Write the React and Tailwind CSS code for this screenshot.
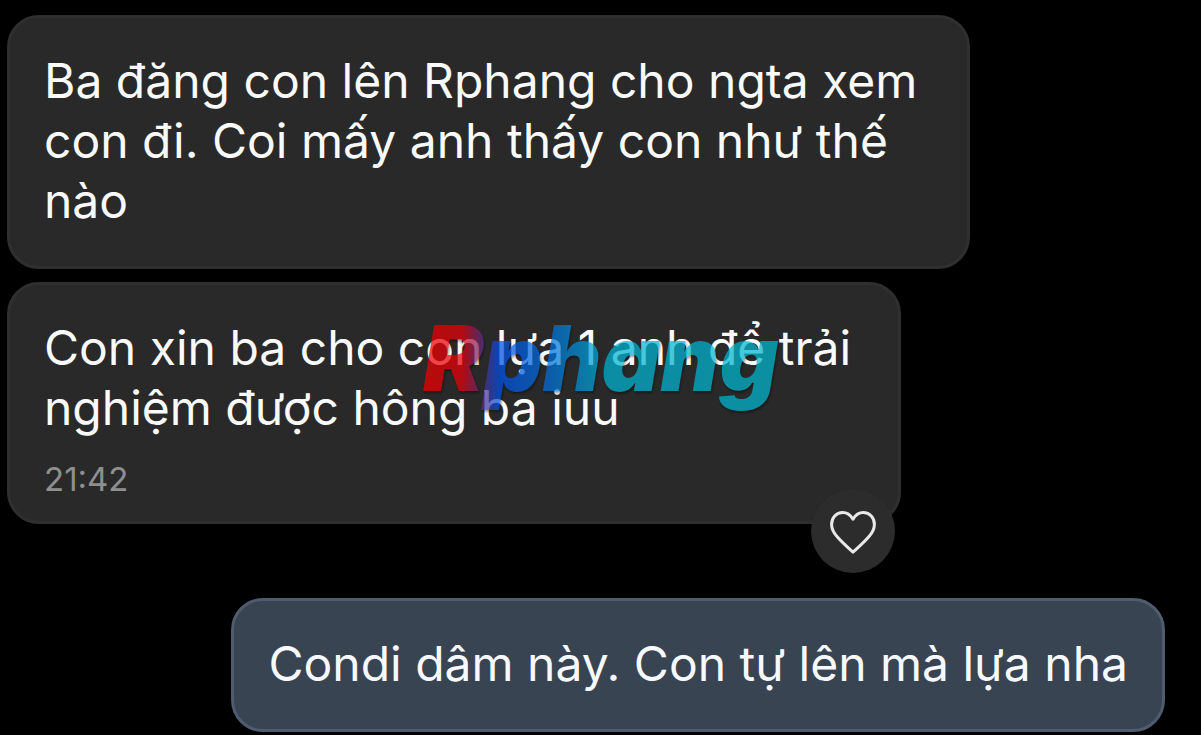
const Bubble = ({ children, className }) => (
  <div className={`relative rounded-[32px] border-3 px-[34px] pt-[33px] text-5xl leading-[60px] ${className}`}>
    {children}
  </div>
)

const HeartIcon = () => (
  <svg width="48" height="46" viewBox="0 0 48 46" fill="none" aria-hidden="true">
    <path
      d="M24 9.2C21.2 4.6 17.6 2.6 13.7 2.6C7.2 2.6 2.6 7.8 2.6 14.4C2.6 19.2 4.8 22.9 8.2 26.8C12.6 31.9 18.2 37 24 42.2C29.8 37 35.4 31.9 39.8 26.8C43.2 22.9 45.4 19.2 45.4 14.4C45.4 7.8 40.8 2.6 34.3 2.6C30.4 2.6 26.8 4.6 24 9.2Z"
      stroke="#e9e9e9"
      strokeWidth="3"
      strokeLinejoin="round"
    />
  </svg>
)

const Watermark = () => (
  <span className="pointer-events-none absolute top-[19px] left-[409px] bg-[linear-gradient(90deg,#f00000_0%,#e8000a_12%,#503090_18%,#0050e8_22%,#0070dc_36%,#00b4d4_52%,#00b8d0_100%)] bg-clip-text px-1 text-[91px] leading-[108px] font-black text-transparent italic opacity-72 drop-shadow-[1px_2px_1px_rgb(0_0_0/0.5)]">
    Rphang
  </span>
)

const App = () => {
  return (
    <main
      lang="vi"
      className="flex min-h-screen flex-col items-start bg-black pt-[15px] pr-9 pb-1 pl-[7px] font-['Inter','Noto_Sans',sans-serif]"
    >
      <Bubble className="w-full max-w-[963px] border-[#2f2f2f] bg-[#292929] pb-[35px] text-[#fafafa]">
        <p>Ba đăng con lên Rphang cho ngta xem con đi. Coi mấy anh thấy con như thế nào</p>
      </Bubble>

      <Bubble className="mt-[13px] w-full max-w-[894px] border-[#2f2f2f] bg-[#292929] pb-[22px] text-[#fafafa]">
        <p>Con xin ba cho con lựa 1 anh để trải nghiệm được hông ba iuu</p>
        <time className="mt-[21px] block text-[33px] leading-10 text-[#8f8f8f]">21:42</time>
        <Watermark />
        <button
          type="button"
          aria-label="Thích"
          className="absolute right-[3px] -bottom-13 flex size-21 items-center justify-center rounded-full bg-[#2c2c2c] pt-1 shadow-md"
        >
          <HeartIcon />
        </button>
      </Bubble>

      <Bubble className="mt-[74px] self-end border-[#4f5c70] bg-[#384452] pb-[35px] text-[#f8f9ff]">
        <p>Condi dâm này. Con tự lên mà lựa nha</p>
      </Bubble>
    </main>
  )
}

export default App
